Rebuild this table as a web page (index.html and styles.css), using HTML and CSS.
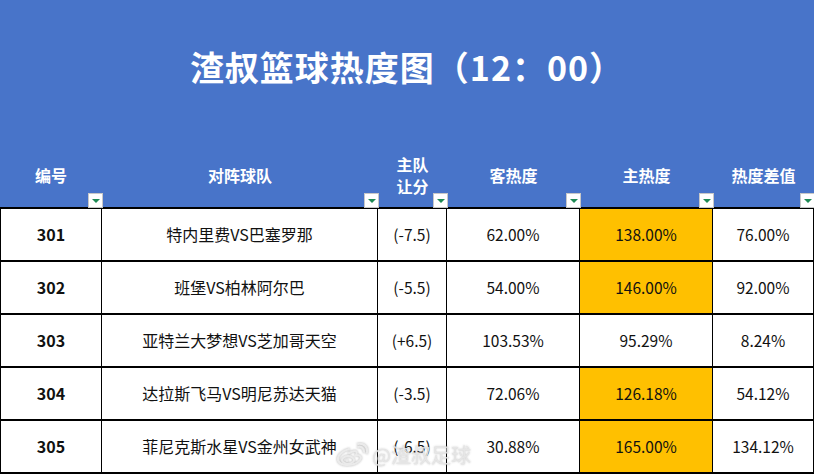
FILE: index.html
```html
<!DOCTYPE html>
<html lang="zh">
<head>
<meta charset="utf-8">
<link rel="stylesheet" href="styles.css">
</head>
<body>
<div class="sheet">
  <div class="banner">
    <h1 class="title">渣叔篮球热度图（12：00）</h1>
    <div class="head-row">
      <div class="hcell"><span>编号</span><i class="filter"></i></div>
      <div class="hcell"><span>对阵球队</span><i class="filter"></i></div>
      <div class="hcell"><span>主队<br>让分</span><i class="filter"></i></div>
      <div class="hcell"><span>客热度</span><i class="filter"></i></div>
      <div class="hcell"><span>主热度</span><i class="filter"></i></div>
      <div class="hcell"><span>热度差值</span><i class="filter"></i></div>
    </div>
  </div>
  <div class="grid">
    <div class="cell id">301</div><div class="cell team">特内里费VS巴塞罗那</div><div class="cell">(-7.5)</div><div class="cell">62.00%</div><div class="cell hot">138.00%</div><div class="cell">76.00%</div>
    <div class="cell id">302</div><div class="cell team">班堡VS柏林阿尔巴</div><div class="cell">(-5.5)</div><div class="cell">54.00%</div><div class="cell hot">146.00%</div><div class="cell">92.00%</div>
    <div class="cell id">303</div><div class="cell team">亚特兰大梦想VS芝加哥天空</div><div class="cell">(+6.5)</div><div class="cell">103.53%</div><div class="cell">95.29%</div><div class="cell">8.24%</div>
    <div class="cell id">304</div><div class="cell team">达拉斯飞马VS明尼苏达天猫</div><div class="cell">(-3.5)</div><div class="cell">72.06%</div><div class="cell hot">126.18%</div><div class="cell">54.12%</div>
    <div class="cell id">305</div><div class="cell team">菲尼克斯水星VS金州女武神</div><div class="cell">(-6.5)</div><div class="cell">30.88%</div><div class="cell hot">165.00%</div><div class="cell">134.12%</div>
  </div>
  <div class="watermark">
    <svg class="wb" width="32" height="24" viewBox="0 0 32 24">
      <g fill="none" stroke="#e9e9e9" stroke-width="2.2" stroke-linecap="round">
        <path d="M13 6 C6 8 1 13 2 17 C3 22 12 23 18 21 C24 19 26 15 24 13 C23 12 21 12 20 12 C21 10 21 8 19 8 C17 8 15 9 13 10"/>
        <ellipse cx="12" cy="17" rx="6" ry="3.8"/>
        <path d="M22 4 C25 3 28 5 28 9"/>
        <path d="M22 0.8 C28 0 32 4 31 10"/>
      </g>
      <circle cx="11" cy="17.5" r="1.6" fill="#e9e9e9"/>
    </svg>
    <span>@渣叔足球</span>
  </div>
</div>
</body>
</html>
```
FILE: styles.css
```css
html, body {
  margin: 0;
  padding: 0;
  background: #ffffff;
}
body {
  font-family: "Noto Sans CJK SC", "Noto Sans", sans-serif;
  width: 814px;
  height: 476px;
  overflow: hidden;
}
.sheet {
  position: relative;
  width: 814px;
}
.banner {
  background: #4874c9;
  color: #ffffff;
}
.title {
  margin: 0;
  height: 139px;
  display: flex;
  align-items: center;
  justify-content: center;
  font-size: 34px;
  font-weight: 700;
  letter-spacing: 1px;
  padding-bottom: 6px;
  box-sizing: border-box;
}
.head-row {
  display: grid;
  grid-template-columns: 102px 276px 69px 133px 133px 101px;
  height: 69px;
}
.hcell {
  position: relative;
  display: flex;
  align-items: center;
  justify-content: center;
  font-size: 16px;
  font-weight: 700;
  line-height: 22px;
  text-align: center;
  padding-top: 3px;
}
.filter {
  position: absolute;
  right: -1px;
  bottom: 0;
  width: 13px;
  height: 13px;
  background: #ffffff;
  border: 1px solid #c8c8c8;
}
.filter::after {
  content: "";
  position: absolute;
  left: 3px;
  top: 5px;
  border-left: 4px solid transparent;
  border-right: 4px solid transparent;
  border-top: 4px solid #1e8a55;
}
.grid {
  display: grid;
  grid-template-columns: 101px 276px 69px 133px 133px 101px;
  grid-auto-rows: 53px;
  border-left: 1px solid #000;
  border-top: 2px solid #000;
  width: 813px;
  margin-top: -1px;
}
.cell {
  border-right: 1px solid #000;
  border-bottom: 2px solid #000;
  display: flex;
  align-items: center;
  justify-content: center;
  font-size: 15.5px;
  color: #111;
  padding-bottom: 1px;
}
.cell.team {
  font-size: 16px;
}
.cell.id {
  font-weight: 700;
  font-size: 16px;
}
.cell.hot {
  background: #ffc000;
}
.watermark {
  position: absolute;
  left: 336px;
  top: 440px;
  display: flex;
  align-items: center;
  gap: 4px;
  color: #e4e4e4;
  font-size: 20px;
  text-shadow: 0 0 2px rgba(120,120,120,0.5);
  opacity: 0.9;
}
.wb {
  filter: drop-shadow(0 0 1px rgba(120,120,120,0.6));
}
```
